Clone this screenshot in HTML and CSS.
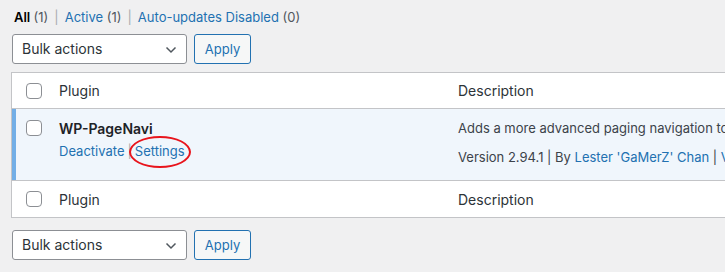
FILE: index.html
```html
<!DOCTYPE html>
<html>
<head>
<meta charset="utf-8">
<link rel="stylesheet" href="styles.css">
</head>
<body>
<div class="wrap">
  <ul class="subsubsub">
    <li><a class="current">All <span class="count">(1)</span></a><span class="sep">|</span></li>
    <li><a>Active <span class="count">(1)</span></a><span class="sep">|</span></li>
    <li><a>Auto-updates Disabled <span class="count">(0)</span></a></li>
  </ul>
  <div class="tablenav top">
    <div class="select">Bulk actions
      <svg class="chev" width="12" height="8" viewBox="0 0 12 8"><path d="M1.5 1.5 L6 6 L10.5 1.5" fill="none" stroke="#50575e" stroke-width="1.5"/></svg>
    </div>
    <button class="button">Apply</button>
  </div>
  <table class="plugins">
    <thead>
      <tr class="head">
        <td class="check cell-mid"><span class="cb"></span></td>
        <th class="name cell-mid">Plugin</th>
        <th class="desc cell-mid">Description</th>
      </tr>
    </thead>
    <tbody>
      <tr class="active">
        <th class="check"><span class="cb"></span></th>
        <td class="name">
          <strong class="title">WP-PageNavi</strong>
          <div class="row-actions"><a>Deactivate</a><span class="rsep">|</span><a class="settings">Settings<span class="ring"></span></a></div>
        </td>
        <td class="desc">
          <p class="desc-text">Adds a more advanced paging navigation to your WordPress blog.</p>
          <div class="meta">Version 2.94.1 | By <a>Lester 'GaMerZ' Chan</a> | <a>View details</a></div>
        </td>
      </tr>
    </tbody>
    <tfoot>
      <tr class="foot">
        <td class="check cell-mid"><span class="cb"></span></td>
        <th class="name cell-mid">Plugin</th>
        <th class="desc cell-mid">Description</th>
      </tr>
    </tfoot>
  </table>
  <div class="tablenav bottom">
    <div class="select">Bulk actions
      <svg class="chev" width="12" height="8" viewBox="0 0 12 8"><path d="M1.5 1.5 L6 6 L10.5 1.5" fill="none" stroke="#50575e" stroke-width="1.5"/></svg>
    </div>
    <button class="button">Apply</button>
  </div>
</div>
</body>
</html>
```
FILE: styles.css
```css
html, body {
  margin: 0;
  padding: 0;
  overflow: hidden;
  background: #f0f0f1;
}
body {
  font-family: Inter, "Noto Sans", sans-serif;
  font-size: 13px;
  color: #3c434a;
  width: 725px;
  height: 272px;
}
a { color: #2271b1; text-decoration: none; }
.wrap {
  padding: 9px 0 0 11px;
  width: 1100px;
}
.subsubsub {
  list-style: none;
  margin: 0 0 8px 3px;
  padding: 0;
  display: flex;
  height: 17px;
  line-height: 17px;
  color: #646970;
}
.subsubsub li { display: flex; }
.subsubsub .current { color: #000; font-weight: 600; }
.subsubsub .count { color: #50575e; font-weight: 400; }
.subsubsub .sep { color: #a7aaad; padding: 0 6px; }
.tablenav {
  display: flex;
  gap: 7px;
  height: 30px;
}
.tablenav.top { margin-left: 1px; margin-bottom: 8px; }
.tablenav.bottom { margin-left: 1px; margin-top: 12px; }
.select {
  box-sizing: border-box;
  width: 175px;
  height: 30px;
  border: 1px solid #8c8f94;
  border-radius: 3px;
  background: #fff;
  color: #2c3338;
  font-size: 14px;
  line-height: 28px;
  padding-left: 9px;
  position: relative;
}
.chev { position: absolute; right: 9px; top: 11px; }
.button {
  box-sizing: border-box;
  height: 30px;
  width: 57px;
  border: 1px solid #2271b1;
  border-radius: 3px;
  background: #f6f7f7;
  color: #2271b1;
  font-family: inherit;
  font-size: 13px;
  padding: 0;
}
.plugins {
  border-collapse: collapse;
  border: 1px solid #c3c4c7;
  background: #fff;
  width: 1080px;
  table-layout: fixed;
}
.plugins th, .plugins td {
  text-align: left;
  vertical-align: top;
  font-weight: 400;
  padding: 0;
}
.plugins .check { width: 37px; }
.plugins .name { width: 389px; padding-left: 10px; }
.plugins .desc { padding-left: 10px; }
.plugins tr.head { height: 36px; }
.plugins tr.foot { height: 37px; }
.plugins .cell-mid {
  vertical-align: middle;
  color: #2c3338;
  font-size: 14px;
}
.plugins tr.head { border-bottom: 1px solid #c3c4c7; }
.plugins tr.foot { border-top: 1px solid #c3c4c7; }
.cb {
  display: block;
  box-sizing: border-box;
  width: 16px;
  height: 16px;
  border: 1px solid #8c8f94;
  border-radius: 4px;
  background: #fff;
  margin-left: 14px;
}
.plugins tr.active { background: #f0f6fc; height: 72px; }
.plugins tr.active th.check { box-shadow: inset 4px 0 0 #72aee6; }
.plugins tr.active .cb { margin-top: 11px; }
.title {
  display: block;
  color: #1d2327;
  font-weight: 600;
  font-size: 14px;
  margin-top: 10px;
  line-height: 19px;
}
.row-actions {
  margin-top: 4px;
  font-size: 13px;
  line-height: 19px;
  color: #a7aaad;
  display: flex;
}
.rsep { padding: 0 3px; }
.settings { position: relative; }
.ring {
  position: absolute;
  box-sizing: border-box;
  left: -6px;
  top: -6px;
  width: 62px;
  height: 32px;
  border: 2.5px solid #e8141c;
  border-radius: 50%;
}
.desc-text {
  margin: 10px 0 0;
  line-height: 19px;
}
.meta {
  margin-top: 10px;
  line-height: 19px;
}
```
